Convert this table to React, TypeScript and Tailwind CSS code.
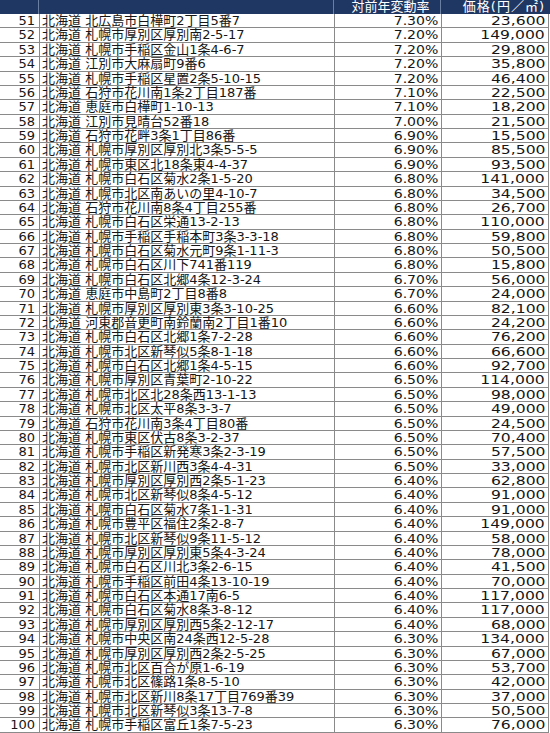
import React from "react";

const rows: [number, string, string, string][] = [
  [51, "北海道 北広島市白樺町2丁目5番7", "7.30%", "23,600"],
  [52, "北海道 札幌市厚別区厚別南2-5-17", "7.20%", "149,000"],
  [53, "北海道 札幌市手稲区金山1条4-6-7", "7.20%", "29,800"],
  [54, "北海道 江別市大麻扇町9番6", "7.20%", "35,800"],
  [55, "北海道 札幌市手稲区星置2条5-10-15", "7.20%", "46,400"],
  [56, "北海道 石狩市花川南1条2丁目187番", "7.10%", "22,500"],
  [57, "北海道 恵庭市白樺町1-10-13", "7.10%", "18,200"],
  [58, "北海道 江別市見晴台52番18", "7.00%", "21,500"],
  [59, "北海道 石狩市花畔3条1丁目86番", "6.90%", "15,500"],
  [60, "北海道 札幌市厚別区厚別北3条5-5-5", "6.90%", "85,500"],
  [61, "北海道 札幌市東区北18条東4-4-37", "6.90%", "93,500"],
  [62, "北海道 札幌市白石区菊水2条1-5-20", "6.80%", "141,000"],
  [63, "北海道 札幌市北区南あいの里4-10-7", "6.80%", "34,500"],
  [64, "北海道 石狩市花川南8条4丁目255番", "6.80%", "26,700"],
  [65, "北海道 札幌市白石区栄通13-2-13", "6.80%", "110,000"],
  [66, "北海道 札幌市手稲区手稲本町3条3-3-18", "6.80%", "59,800"],
  [67, "北海道 札幌市白石区菊水元町9条1-11-3", "6.80%", "50,500"],
  [68, "北海道 札幌市白石区川下741番119", "6.80%", "15,800"],
  [69, "北海道 札幌市白石区北郷4条12-3-24", "6.70%", "56,000"],
  [70, "北海道 恵庭市中島町2丁目8番8", "6.70%", "24,000"],
  [71, "北海道 札幌市厚別区厚別東3条3-10-25", "6.60%", "82,100"],
  [72, "北海道 河東郡音更町南鈴蘭南2丁目1番10", "6.60%", "24,200"],
  [73, "北海道 札幌市白石区北郷1条7-2-28", "6.60%", "76,200"],
  [74, "北海道 札幌市北区新琴似5条8-1-18", "6.60%", "66,600"],
  [75, "北海道 札幌市白石区北郷1条4-5-15", "6.60%", "92,700"],
  [76, "北海道 札幌市厚別区青葉町2-10-22", "6.50%", "114,000"],
  [77, "北海道 札幌市北区北28条西13-1-13", "6.50%", "98,000"],
  [78, "北海道 札幌市北区太平8条3-3-7", "6.50%", "49,000"],
  [79, "北海道 石狩市花川南3条4丁目80番", "6.50%", "24,500"],
  [80, "北海道 札幌市東区伏古8条3-2-37", "6.50%", "70,400"],
  [81, "北海道 札幌市手稲区新発寒3条2-3-19", "6.50%", "57,500"],
  [82, "北海道 札幌市北区新川西3条4-4-31", "6.50%", "33,000"],
  [83, "北海道 札幌市厚別区厚別西2条5-1-23", "6.40%", "62,800"],
  [84, "北海道 札幌市北区新琴似8条4-5-12", "6.40%", "91,000"],
  [85, "北海道 札幌市白石区菊水7条1-1-31", "6.40%", "91,000"],
  [86, "北海道 札幌市豊平区福住2条2-8-7", "6.40%", "149,000"],
  [87, "北海道 札幌市北区新琴似9条11-5-12", "6.40%", "58,000"],
  [88, "北海道 札幌市厚別区厚別東5条4-3-24", "6.40%", "78,000"],
  [89, "北海道 札幌市白石区川北3条2-6-15", "6.40%", "41,500"],
  [90, "北海道 札幌市手稲区前田4条13-10-19", "6.40%", "70,000"],
  [91, "北海道 札幌市白石区本通17南6-5", "6.40%", "117,000"],
  [92, "北海道 札幌市白石区菊水8条3-8-12", "6.40%", "117,000"],
  [93, "北海道 札幌市厚別区厚別西5条2-12-17", "6.40%", "68,000"],
  [94, "北海道 札幌市中央区南24条西12-5-28", "6.30%", "134,000"],
  [95, "北海道 札幌市厚別区厚別西2条2-5-25", "6.30%", "67,000"],
  [96, "北海道 札幌市北区百合が原1-6-19", "6.30%", "53,700"],
  [97, "北海道 札幌市北区篠路1条8-5-10", "6.30%", "42,000"],
  [98, "北海道 札幌市北区新川8条17丁目769番39", "6.30%", "37,000"],
  [99, "北海道 札幌市北区新琴似3条13-7-8", "6.30%", "50,500"],
  [100, "北海道 札幌市手稲区富丘1条7-5-23", "6.30%", "76,000"],
];

export default function App() {
  return (
    <div
      className="w-[550px] h-[733px] overflow-hidden bg-white text-[13px] text-[#161616]"
      style={{ fontFamily: '"DejaVu Sans", "Noto Sans CJK JP", sans-serif' }}
    >
      <div className="flex h-[14px] bg-[#1f3763] text-white leading-[14px] w-[550px]">
        <div className="w-[39px] shrink-0 border-r border-[#6b7fa3]" />
        <div className="w-[295px] shrink-0 border-r border-[#6b7fa3]" />
        <div className="w-[107px] shrink-0 border-r border-[#6b7fa3] text-center pl-[7px] whitespace-nowrap">
          対前年変動率
        </div>
        <div className="w-[109px] shrink-0 text-right pr-[5px] whitespace-nowrap tracking-[1px]">
          価格(円／㎡)
        </div>
      </div>
      <div className="w-[549px] border-r border-[#8a8a8a]">
        {rows.map(([n, addr, pct, price]) => (
          <div
            key={n}
            className="flex h-[14.38px] border-b border-[#8a8a8a] leading-[14px]"
          >
            <div className="w-[40px] shrink-0 border-r border-[#8a8a8a] text-right pr-[4px] whitespace-nowrap">
              {n}
            </div>
            <div className="w-[295px] shrink-0 border-r border-[#8a8a8a] pl-[2px] whitespace-nowrap overflow-hidden">
              {addr}
            </div>
            <div className="w-[107px] shrink-0 border-r border-[#8a8a8a] text-right pr-[3px] whitespace-nowrap">
              <span className="inline-block origin-right scale-x-[1.08]">{pct}</span>
            </div>
            <div className="w-[106px] shrink-0 text-right pr-[3px] whitespace-nowrap">
              <span className="inline-block origin-right scale-x-[1.2]">{price}</span>
            </div>
          </div>
        ))}
      </div>
    </div>
  );
}
